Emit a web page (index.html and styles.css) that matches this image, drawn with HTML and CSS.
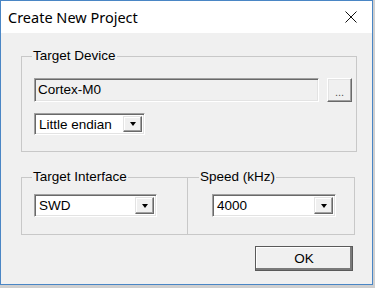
FILE: index.html
```html
<!DOCTYPE html>
<html lang="en">
<head>
  <meta charset="UTF-8" />
  <title>Create New Project</title>
  <link rel="stylesheet" href="styles.css">
</head>
<body>
  <div class="window">
    <div class="titlebar">
      <span class="title">Create New Project</span>
      <svg class="close" viewBox="0 0 12 12"><path d="M0.5 0.5L11.5 11.5M11.5 0.5L0.5 11.5"/></svg>
    </div>
    <div class="content">
      <fieldset class="group device">
        <legend>Target Device</legend>
        <div class="row">
          <div class="field">Cortex-M0</div>
          <button class="btn browse">...</button>
        </div>
        <div class="combo endian"><span class="value">Little endian</span><span class="drop"></span></div>
      </fieldset>
      <div class="groups">
        <fieldset class="group iface">
          <legend>Target Interface</legend>
          <div class="combo swd"><span class="value">SWD</span><span class="drop"></span></div>
        </fieldset>
        <fieldset class="group speed">
          <legend>Speed (kHz)</legend>
          <div class="combo khz"><span class="value">4000</span><span class="drop"></span></div>
        </fieldset>
      </div>
      <div class="actions">
        <button class="btn ok">OK</button>
      </div>
    </div>
  </div>
</body>
</html>
```

FILE: styles.css
```css
* {
  margin: 0;
  padding: 0;
  box-sizing: border-box;
}
body {
  background: #cfcfcf;
  font-family: 'Liberation Sans', Arial, sans-serif;
  font-size: 13.5px;
  color: #000;
}
.window {
  width: 373px;
  height: 285px;
  border: 1px solid #4a86c5;
  background: #f0f0f0;
}
.titlebar {
  height: 32px;
  background: #fff;
  display: flex;
  align-items: center;
  justify-content: space-between;
  padding: 0 15px 0 7px;
}
.title {
  font-family: 'Noto Sans', sans-serif;
  font-size: 14.5px;
  color: #000;
}
.close {
  width: 12px;
  height: 12px;
  stroke: #111;
  stroke-width: 1;
  fill: none;
}
.content {
  padding: 15px 15px 0 20px;
}
.group {
  border: 1px solid #c8c8c8;
  min-width: 0;
}
.group legend {
  font-size: 13.5px;
  line-height: 16px;
  padding: 0 1px;
  margin-left: -2px;
}
.device {
  width: 336px;
  padding: 14px 4px 16px 12px;
}
.row {
  display: flex;
  gap: 8px;
}
.field {
  width: 285px;
  height: 24px;
  padding: 3px 0 0 3px;
  background: #f0f0f0;
  border: 1px solid;
  border-color: #a0a0a0 #fff #fff #a0a0a0;
  box-shadow: inset 1px 1px #696969, inset -1px -1px #e3e3e3;
}
.btn {
  font-family: 'Liberation Sans', Arial, sans-serif;
  font-size: 13.5px;
  background: #f0f0f0;
  color: #000;
  border: 1px solid;
  border-color: #fff #696969 #696969 #fff;
  box-shadow: inset -1px -1px #a0a0a0, inset 1px 1px #e3e3e3;
}
.browse {
  width: 25px;
  height: 24px;
  font-size: 11px;
  color: #555;
  padding-top: 3px;
}
.combo {
  display: flex;
  height: 22px;
  background: #fff;
  border: 1px solid;
  border-color: #a0a0a0 #fff #fff #a0a0a0;
  box-shadow: inset 1px 1px #696969, inset -1px -1px #e3e3e3;
  padding: 2px;
}
.combo .value {
  flex: 1;
  padding: 1px 0 0 2px;
  line-height: 16px;
}
.drop {
  width: 19px;
  background: #f0f0f0;
  border: 1px solid;
  border-color: #e3e3e3 #696969 #696969 #e3e3e3;
  box-shadow: inset -1px -1px #a0a0a0, inset 1px 1px #fff;
  display: flex;
  align-items: center;
  justify-content: center;
}
.drop::after {
  content: "";
  border-left: 3.5px solid transparent;
  border-right: 3.5px solid transparent;
  border-top: 4px solid #000;
}
.endian {
  width: 111px;
  margin-top: 11px;
}
.groups {
  display: flex;
  margin-top: 17px;
}
.iface {
  width: 167px;
  padding: 9px 0 17px 12px;
}
.speed {
  width: 168px;
  margin-left: -1px;
  padding: 9px 0 17px 24px;
}
.speed legend {
  margin-left: -13px;
}
.swd {
  width: 123px;
  height: 23px;
}
.khz {
  width: 124px;
  height: 23px;
}
.actions {
  display: flex;
  justify-content: flex-end;
  margin-top: 11px;
  padding-right: 4px;
}
.ok {
  width: 98px;
  height: 25px;
  border: 1px solid #5a5a5a;
  box-shadow: inset -2px -2px #7a7a7a, inset 1px 1px #fff;
}
```
